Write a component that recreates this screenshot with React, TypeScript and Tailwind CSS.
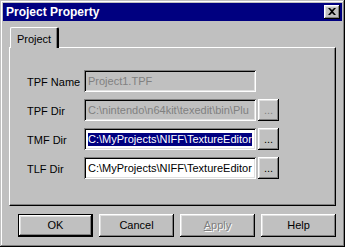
import React from 'react';

const raised =
  'shadow-[inset_-1px_-1px_0_#000,inset_1px_1px_0_#fff,inset_-2px_-2px_0_#808080,inset_2px_2px_0_#dfdfdf]';
const sunken =
  'shadow-[inset_1px_1px_0_#808080,inset_-1px_-1px_0_#fff,inset_2px_2px_0_#000,inset_-2px_-2px_0_#dfdfdf]';

const rows = [
  { label: 'TPF Name', value: 'Project1.TPF', disabled: true, browse: false, selected: false },
  { label: 'TPF Dir', value: 'C:\\nintendo\\n64kit\\texedit\\bin\\Plu', disabled: true, browse: true, selected: false },
  { label: 'TMF Dir', value: 'C:\\MyProjects\\NIFF\\TextureEditor', disabled: false, browse: true, selected: true },
  { label: 'TLF Dir', value: 'C:\\MyProjects\\NIFF\\TextureEditor', disabled: false, browse: true, selected: false },
];

const App: React.FC = () => {
  return (
    <div
      className="w-[345px] h-[247px] bg-[#c0c0c0] p-[3px] text-[11px] text-black overflow-hidden shadow-[inset_-1px_-1px_0_#000,inset_1px_1px_0_#c0c0c0,inset_-2px_-2px_0_#808080,inset_2px_2px_0_#fff]"
      style={{ fontFamily: '"Liberation Sans", Arial, sans-serif' }}
    >
      {/* title bar */}
      <div className="h-[18px] bg-[#000080] flex items-center justify-between pl-[3px] pr-[2px]">
        <span className="text-white font-bold text-[12px] leading-none">Project Property</span>
        <div className={`w-[16px] h-[14px] bg-[#c0c0c0] flex items-center justify-center ${raised}`}>
          <svg width="8" height="7" viewBox="0 0 8 7" className="mb-[1px]">
            <path d="M0 0h2l2 2 2-2h2L5 3.5 8 7H6L4 5 2 7H0l3-3.5z" fill="#000" />
          </svg>
        </div>
      </div>

      {/* tab */}
      <div className="ml-[7px] mt-[6px] flex">
        <div className="relative z-10 w-[49px] h-[21px] bg-[#c0c0c0] rounded-t-[2px] border-l border-t border-white border-r-2 border-r-[#000] flex items-start justify-center pt-[3px] shadow-[inset_-1px_0_0_#808080]">
          <span>Project</span>
        </div>
      </div>

      {/* tab panel */}
      <div className="-mt-[1px] ml-[6px] w-[327px] h-[159px] border-t border-l border-white shadow-[inset_-1px_-1px_0_#808080] border-r border-b border-r-black border-b-black pt-[22px] pl-[17px] flex flex-col gap-[7px]">
        {rows.map((r) => (
          <div key={r.label} className="flex items-center h-[22px]">
            <span className="w-[57px] pt-[2px]">{r.label}</span>
            <div
              className={`w-[172px] h-[22px] px-[4px] flex items-center overflow-hidden whitespace-nowrap ${sunken} ${
                r.disabled ? 'bg-[#c0c0c0] text-[#808080]' : 'bg-white'
              }`}
            >
              {r.selected ? (
                <span className="bg-[#000080] text-white leading-[13px]">{r.value}</span>
              ) : (
                <span>{r.value}</span>
              )}
            </div>
            {r.browse && (
              <div
                className={`ml-[2px] w-[21px] h-[22px] bg-[#c0c0c0] flex items-end justify-center pb-[5px] ${raised} ${
                  r.disabled ? 'text-[#808080]' : ''
                }`}
              >
                <span className="leading-none">...</span>
              </div>
            )}
          </div>
        ))}
      </div>

      {/* buttons */}
      <div className="mt-[8px] ml-[15px] flex gap-[6px]">
        <div className="w-[75px] h-[23px] border border-black">
          <div className={`w-full h-full flex items-center justify-center ${raised}`}>OK</div>
        </div>
        <div className={`w-[75px] h-[23px] flex items-center justify-center ${raised}`}>Cancel</div>
        <div className={`w-[75px] h-[23px] flex items-center justify-center text-[#808080] [text-shadow:1px_1px_0_#fff] ${raised}`}>
          <span><span className="underline">A</span>pply</span>
        </div>
        <div className={`w-[75px] h-[23px] flex items-center justify-center ${raised}`}>Help</div>
      </div>
    </div>
  );
};

export default App;
